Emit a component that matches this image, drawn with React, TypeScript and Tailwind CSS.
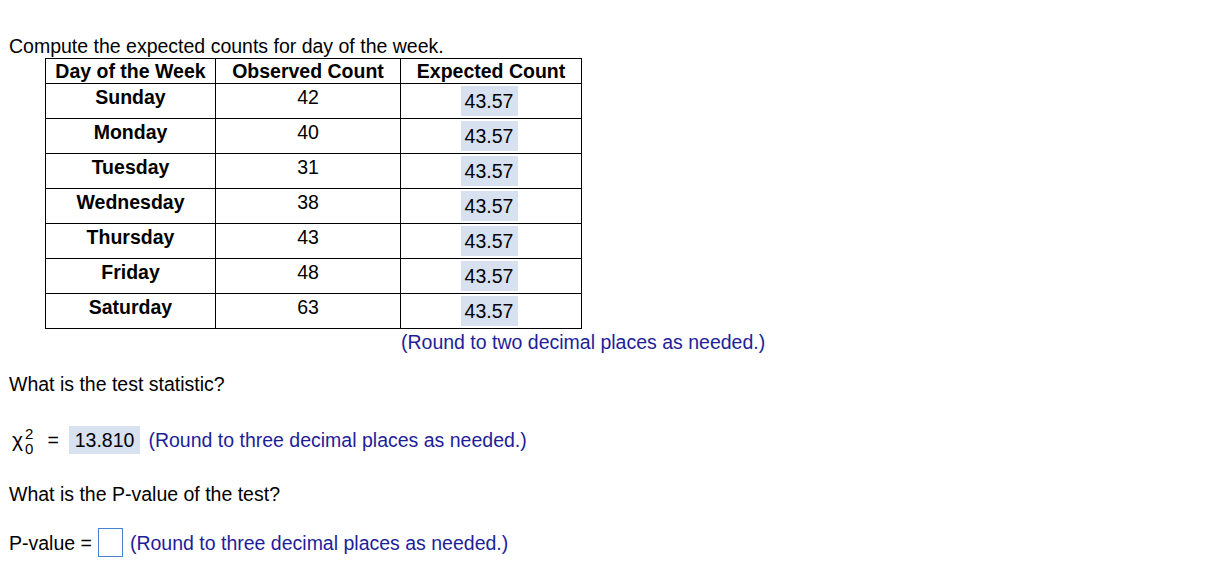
import React from "react";

const rows: [string, string][] = [
  ["Sunday", "42"],
  ["Monday", "40"],
  ["Tuesday", "31"],
  ["Wednesday", "38"],
  ["Thursday", "43"],
  ["Friday", "48"],
  ["Saturday", "63"],
];

export default function App() {
  return (
    <div
      className="w-[1222px] h-[574px] bg-white text-black text-[19.5px] leading-[22px] pl-[9px] pt-[35px]"
      style={{ fontFamily: '"Liberation Sans", Arial, sans-serif' }}
    >
      <div>Compute the expected counts for day of the week.</div>
      <table className="ml-[36px] border-collapse mt-[1px]">
        <thead>
          <tr className="h-[25px]">
            <th className="w-[170px] p-0 border border-black font-bold align-top pt-[1px]">Day of the Week</th>
            <th className="w-[185px] p-0 border border-black font-bold align-top pt-[1px]">Observed Count</th>
            <th className="w-[181px] p-0 border border-black font-bold align-top pt-[1px]">Expected Count</th>
          </tr>
        </thead>
        <tbody>
          {rows.map(([d, o]) => (
            <tr key={d} className="h-[35px]">
              <td className="p-0 border border-black font-bold text-center align-top pt-[2px]">{d}</td>
              <td className="p-0 border border-black text-center align-top pt-[2px]">{o}</td>
              <td className="p-0 border border-black text-center align-top pt-[2px] pr-[4px]">
                <span className="inline-block bg-[#d8e1f0] w-[57px] h-[30px] leading-[30px] align-top">43.57</span>
              </td>
            </tr>
          ))}
        </tbody>
      </table>
      <div className="ml-[392px] mt-[2px] text-[#1e1e99]">(Round to two decimal places as needed.)</div>

      <div className="mt-[20px]">What is the test statistic?</div>

      <div className="mt-[31px] flex items-center h-[28px]">
        <span className="inline-flex items-center ml-[3px]">
          <span className="text-[21px] leading-[22px]">χ</span>
          <span className="inline-flex flex-col text-[15px] leading-[15px] ml-[2px] mt-[1px]">
            <span>2</span>
            <span>0</span>
          </span>
        </span>
        <span className="ml-[14px]">=</span>
        <span className="ml-[10px] bg-[#d8e1f0] px-[6px] h-[28px] leading-[28px] inline-block">13.810</span>
        <span className="ml-[8px] text-[#1e1e99]">(Round to three decimal places as needed.)</span>
      </div>

      <div className="mt-[29px]">What is the P-value of the test?</div>

      <div className="mt-[23px] flex items-center h-[29px]">
        <span>P-value =</span>
        <span className="ml-[6px] inline-block w-[25px] h-[29px] border border-[#4a80d0] bg-white"></span>
        <span className="ml-[7px] text-[#1e1e99]">(Round to three decimal places as needed.)</span>
      </div>
    </div>
  );
}
